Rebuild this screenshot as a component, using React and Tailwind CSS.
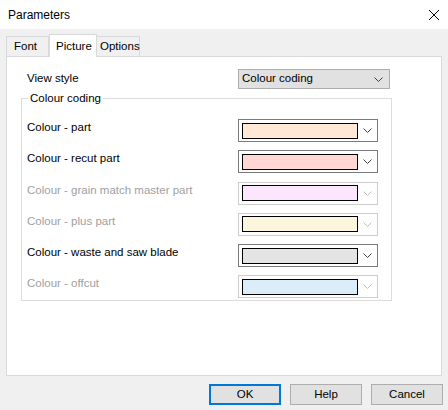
import React from 'react';

const rows = [
    { label: 'Colour - part', color: '#ffe8d5', enabled: true },
    { label: 'Colour - recut part', color: '#ffd8d4', enabled: true },
    { label: 'Colour - grain match master part', color: '#fbe6fd', enabled: false },
    { label: 'Colour - plus part', color: '#fdf6de', enabled: false },
    { label: 'Colour - waste and saw blade', color: '#e4e4e4', enabled: true },
    { label: 'Colour - offcut', color: '#daedf9', enabled: false },
];

function Chevron({ color }) {
    return (
        <svg width="9" height="5" viewBox="0 0 9 5" className="shrink-0">
            <path d="M0.5 0.5 L4.5 4.5 L8.5 0.5" fill="none" stroke={color} strokeWidth="1" />
        </svg>
    );
}

function ColourCombo({ color, enabled }) {
    return (
        <div
            className={`flex h-[23px] w-[140px] items-center border bg-white pl-[3px] ${
                enabled ? 'border-[#7a7a7a]' : 'border-[#cccccc]'
            }`}
        >
            <div className="h-[16px] w-[116px] border border-black" style={{ backgroundColor: color }} />
            <div className="flex flex-1 justify-center">
                <Chevron color={enabled ? '#404040' : '#bfbfbf'} />
            </div>
        </div>
    );
}

export default function App() {
    return (
        <div
            className="flex h-[410px] w-[448px] flex-col bg-[#f0f0f0] text-[11.5px] text-black"
            style={{ fontFamily: '"Liberation Sans", Arial, sans-serif' }}
        >
            {/* Title bar */}
            <div className="flex h-[29px] items-center justify-between bg-white pl-[8px] pr-[8px]">
                <span className="text-[12px]">Parameters</span>
                <svg width="12" height="12" viewBox="0 0 12 12">
                    <path d="M1 1 L11 11 M11 1 L1 11" stroke="#000" strokeWidth="1" />
                </svg>
            </div>

            {/* Tabs */}
            <div className="mt-[5px] flex h-[22px] items-end pl-[6px]">
                <div className="flex h-[20px] w-[43px] items-center border border-b-0 border-[#d9d9d9] bg-[#f0f0f0] pl-[7px]">
                    Font
                </div>
                <div className="relative z-10 -mb-px flex h-[23px] w-[48px] items-start border border-b-0 border-[#d9d9d9] bg-white pl-[6px] pt-[3px]">
                    Picture
                </div>
                <div className="flex h-[20px] w-[43px] items-center border border-b-0 border-l-0 border-[#d9d9d9] bg-[#f0f0f0] pl-[3px]">
                    Options
                </div>
            </div>

            {/* Tab panel */}
            <div className="ml-[6px] h-[320px] w-[436px] border border-[#d9d9d9] bg-white">
                <div className="ml-[20px] mt-[12px] flex items-center">
                    <span className="w-[211px]">View style</span>
                    <div className="flex h-[20px] w-[152px] items-center justify-between border border-[#adadad] bg-[#e1e1e1] pl-[3px] pr-[6px]">
                        <span>Colour coding</span>
                        <Chevron color="#404040" />
                    </div>
                </div>

                {/* Group box */}
                <div className="relative ml-[14px] mt-[9px] h-[203px] w-[371px] border border-[#dcdcdc]">
                    <span className="absolute -top-[8px] left-[6px] bg-white px-[2px] leading-[14px]">Colour coding</span>
                    <div className="mt-[20px] flex flex-col gap-[8px]">
                        {rows.map((row) => (
                            <div key={row.label} className="flex items-center">
                                <span
                                    className={`w-[216px] pl-[5px] pb-[6px] ${
                                        row.enabled ? 'text-black' : 'text-[#a0a0a0]'
                                    }`}
                                >
                                    {row.label}
                                </span>
                                <ColourCombo color={row.color} enabled={row.enabled} />
                            </div>
                        ))}
                    </div>
                </div>
            </div>

            {/* Buttons */}
            <div className="mt-[8px] flex justify-end gap-[9px] pr-[5px]">
                <button className="h-[21px] w-[72px] border-2 border-[#0078d7] bg-[#e1e1e1]">OK</button>
                <button className="h-[21px] w-[72px] border border-[#adadad] bg-[#e1e1e1]">Help</button>
                <button className="h-[21px] w-[72px] border border-[#adadad] bg-[#e1e1e1]">Cancel</button>
            </div>
        </div>
    );
}
